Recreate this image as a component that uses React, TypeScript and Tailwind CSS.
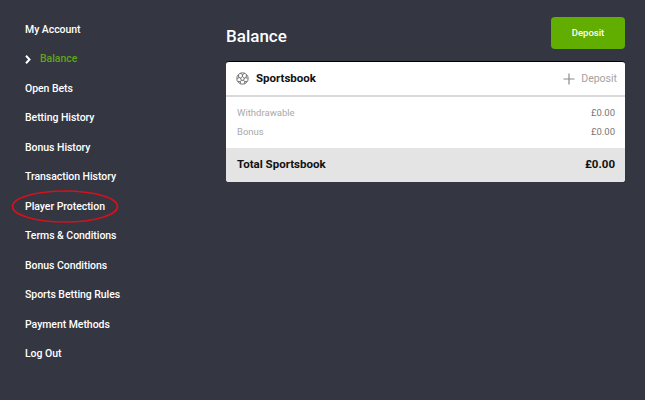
const menu = [
  "My Account",
  "Balance",
  "Open Bets",
  "Betting History",
  "Bonus History",
  "Transaction History",
  "Player Protection",
  "Terms & Conditions",
  "Bonus Conditions",
  "Sports Betting Rules",
  "Payment Methods",
  "Log Out",
];

function BallIcon() {
  return (
    <svg width="13" height="13" viewBox="0 0 24 24" fill="none" stroke="#555" strokeWidth="1.5">
      <circle cx="12" cy="12" r="10.5" />
      <path d="M12 8.5l3.5 2.6-1.3 4.2H9.8l-1.3-4.2z" />
      <path d="M12 8.5V5l-4-2.5M12 5l4-2.5M15.5 11.1l3.4-1.1 2.4 3M18.9 10l.3-4.5M14.2 15.3l2.1 2.9-1 3.3M16.3 18.2l4-1.2M9.8 15.3l-2.1 2.9 1 3.3M7.7 18.2l-4-1.2M8.5 11.1L5.1 10l-2.4 3M5.1 10l-.3-4.5" />
    </svg>
  );
}

function SideItem({ label }: { label: string }) {
  if (label === "Balance") {
    return (
      <li className="flex h-[29.5px] items-center">
        <svg width="6" height="9" viewBox="0 0 6 9" className="mr-[9px]" fill="none" stroke="#fff" strokeWidth="2">
          <path d="M1 0.8L4.5 4.5L1 8.2" />
        </svg>
        <span className="text-[#5fa51c]">{label}</span>
      </li>
    );
  }
  return <li className="flex h-[29.5px] items-center text-white">{label}</li>;
}

export default function App() {
  return (
    <div className="relative flex h-[400px] w-[645px] overflow-hidden bg-[#343642] font-['Roboto',sans-serif]">
      <ul className="w-[226px] pl-[25px] pt-[15px] text-[10.5px] font-medium tracking-[-0.05px]">
        {menu.map((m) => (
          <SideItem key={m} label={m} />
        ))}
      </ul>

      <div className="w-[399px] pt-[17px]">
        <div className="flex h-[44px] items-start justify-between">
          <h1 className="mt-[6px] text-[17px] leading-[26px] font-medium text-white">Balance</h1>
          <button className="h-[32px] w-[74px] rounded-[4px] bg-[#62ae00] text-[9.5px] font-medium text-white">
            Deposit
          </button>
        </div>

        <div className="overflow-hidden rounded-[3px] border-t border-black bg-white">
          <div className="flex h-[35px] items-center justify-between border-b-2 border-[#d9d9d9] pl-[10px] pr-[8px]">
            <div className="flex items-center gap-[7px]">
              <BallIcon />
              <span className="text-[11.5px] font-bold text-[#111]">Sportsbook</span>
            </div>
            <div className="flex items-center gap-[6px] text-[10.5px] text-[#a3a3a3]">
              <svg width="12" height="12" viewBox="0 0 12 12" stroke="#8a8a8a" strokeWidth="1.2">
                <path d="M6 0.5v11M0.5 6h11" />
              </svg>
              Deposit
            </div>
          </div>

          <div className="pl-[11px] pr-[10px] pt-[6px] pb-[7px] text-[9.5px] leading-[19px]">
            <div className="flex justify-between">
              <span className="text-[#a9a9a9]">Withdrawable</span>
              <span className="text-[#777]">£0.00</span>
            </div>
            <div className="flex justify-between">
              <span className="text-[#a9a9a9]">Bonus</span>
              <span className="text-[#777]">£0.00</span>
            </div>
          </div>

          <div className="flex h-[34px] items-center justify-between bg-[#e4e4e4] pl-[11px] pr-[10px] text-[11.5px] font-bold text-[#111]">
            <span>Total Sportsbook</span>
            <span>£0.00</span>
          </div>
        </div>
      </div>

      <svg className="absolute left-[11px] top-[189px]" width="108" height="35" viewBox="0 0 108 35" fill="none">
        <ellipse cx="54" cy="17.5" rx="52.5" ry="15.5" stroke="#d3121c" strokeWidth="1.7" />
      </svg>
    </div>
  );
}
